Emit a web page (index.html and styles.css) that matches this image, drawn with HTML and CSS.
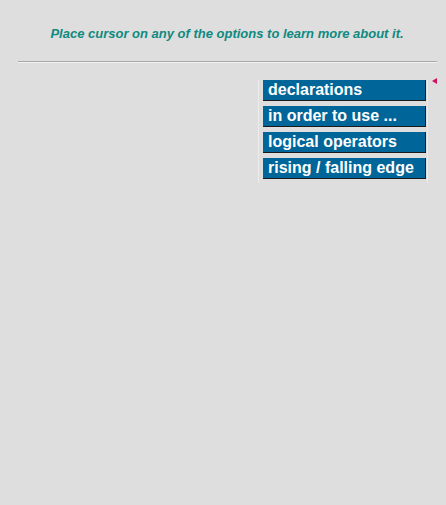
FILE: index.html
```html
<!DOCTYPE html>
<html>
<head>
<meta charset="utf-8">
<link rel="stylesheet" href="styles.css">
</head>
<body>
<p class="intro">Place cursor on any of the options to learn more about it.</p>
<div class="rule"></div>
<div class="menu-row">
  <div class="menu">
    <div class="item">declarations</div>
    <div class="item">in order to use ...</div>
    <div class="item">logical operators</div>
    <div class="item">rising / falling edge</div>
  </div>
  <div class="marker"><span class="tri"></span></div>
</div>
</body>
</html>
```

FILE: styles.css
```css
html, body {
  margin: 0;
  padding: 0;
  background: #dedede;
}
body {
  font-family: "Liberation Sans", Arial, sans-serif;
  width: 446px;
  height: 505px;
}
.intro {
  margin: 0;
  padding-top: 26px;
  height: 18px;
  text-align: center;
  font-size: 13px;
  font-weight: bold;
  font-style: italic;
  color: #0f8a80;
  padding-left: 8px;
}
.rule {
  margin: 17px 9px 0 18px;
  border-top: 1px solid #a9a9a9;
  border-bottom: 1px solid #f2f2f2;
  height: 0;
}
.menu-row {
  display: flex;
  justify-content: flex-end;
  margin-top: 17px;
  padding-right: 4px;
}
.menu {
  display: flex;
  flex-direction: column;
  gap: 5px;
  padding-left: 4px;
  border-left: 1px solid #ececec;
  padding-bottom: 4px;
}
.item {
  width: 157px;
  height: 20px;
  padding-left: 5px;
  background: #006699;
  border-right: 1px solid #1a1a1a;
  border-bottom: 1px solid #1a1a1a;
  color: #ffffff;
  font-size: 16px;
  font-weight: bold;
  line-height: 19px;
  white-space: nowrap;
}
.marker {
  width: 10px;
  padding-left: 4px;
  border-left: 1px solid #ececec;
  margin-left: 1px;
}
.tri {
  display: block;
  width: 0;
  height: 0;
  margin-top: -2px;
  border-top: 3px solid transparent;
  border-bottom: 3px solid transparent;
  border-right: 5px solid #d01060;
}
```
